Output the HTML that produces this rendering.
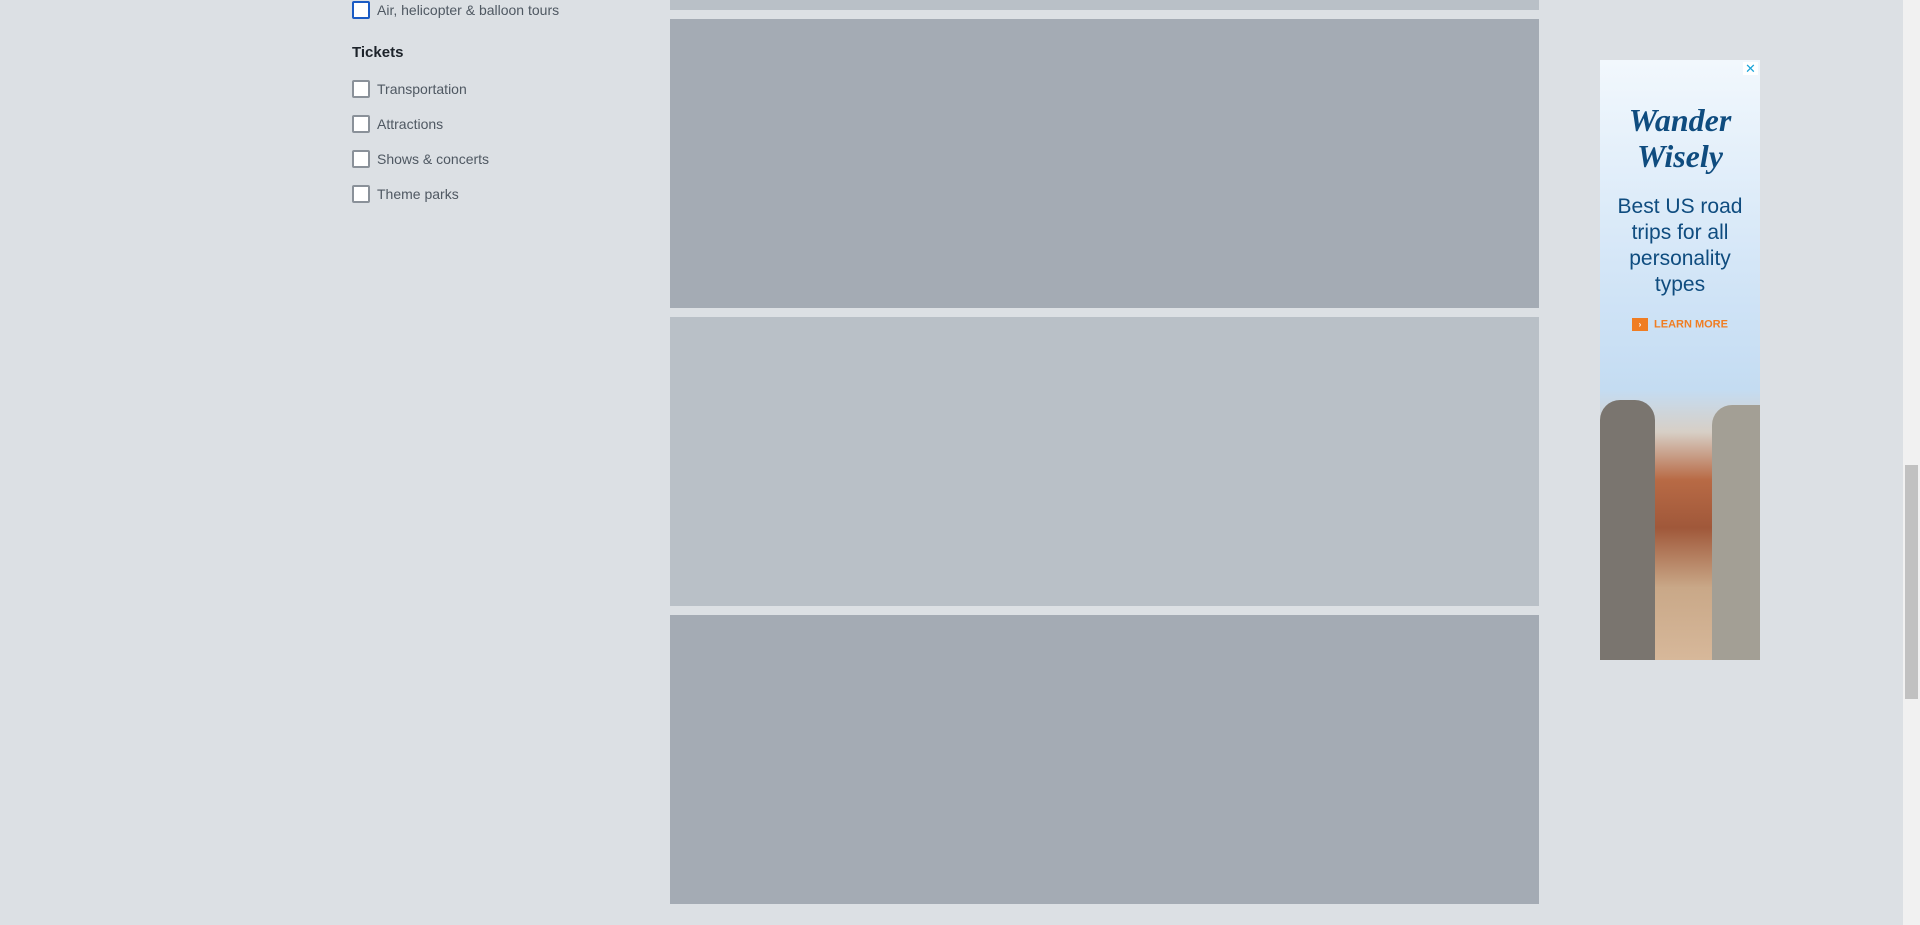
<!DOCTYPE html>
<html><head><meta charset="utf-8"><style>
body{margin:0;width:1920px;height:925px;background:#dce0e4;font-family:"Liberation Sans",sans-serif;overflow:hidden;position:relative}
.cb{position:absolute;left:352px;width:14px;height:14px;border:2px solid #8a9199;border-radius:2px;background:#fff}
.lb{position:absolute;left:377px;font-size:14px;color:#4f5862;line-height:18px}
.card{position:absolute;left:670px;width:869px}
.sb{position:absolute;left:1903px;top:0;width:17px;height:925px;background:#f1f1f1}
</style></head><body>
<div class="cb" style="top:1px;border-color:#1a5bc4"></div><div class="lb" style="top:1px">Air, helicopter &amp; balloon tours</div>
<div style="position:absolute;left:352px;top:44px;font-size:15px;font-weight:bold;color:#1d232a">Tickets</div>
<div class="cb" style="top:80px"></div><div class="lb" style="top:80px">Transportation</div>
<div class="cb" style="top:115px"></div><div class="lb" style="top:115px">Attractions</div>
<div class="cb" style="top:150px"></div><div class="lb" style="top:150px">Shows &amp; concerts</div>
<div class="cb" style="top:185px"></div><div class="lb" style="top:185px">Theme parks</div>
<div class="card" style="top:0;height:10px;background:#b9c0c7"></div>
<div class="card" style="top:19px;height:289px;background:#a4abb4"></div>
<div class="card" style="top:317px;height:289px;background:#b9c0c7"></div>
<div class="card" style="top:615px;height:289px;background:#a4abb4"></div>
<div style="position:absolute;left:1600px;top:60px;width:160px;height:600px;background:linear-gradient(#f2f8fd 0%,#cfe3f6 40%,#c4dcf2 55%,#d7cfc6 62%,#b86a45 70%,#a0583a 78%,#c9a888 88%,#d7b89a 100%);overflow:hidden;text-align:center;color:#0f4c7f">
<div style="position:absolute;right:2px;top:2px;width:15px;height:13px;background:#fff;color:#1aa4d8;font-size:13px;line-height:13px">✕</div>
<div style="margin-top:42px;font-family:'Liberation Serif',serif;font-style:italic;font-weight:bold;font-size:32px;line-height:36px">Wander<br>Wisely</div>
<div style="margin-top:20px;font-size:21px;line-height:26px">Best US road<br>trips for all<br>personality<br>types</div>
<div style="margin-top:20px;font-size:11px;font-weight:bold;color:#f07d22"><span style="display:inline-block;width:16px;height:13px;background:#f07d22;color:#fff;vertical-align:middle;margin-right:6px;font-size:8px;line-height:13px">›</span>LEARN MORE</div>
<div style="position:absolute;left:0;top:340px;width:55px;height:260px;background:#7a756f;border-radius:20px 20px 0 0"></div>
<div style="position:absolute;left:112px;top:345px;width:48px;height:255px;background:#a39f95;border-radius:20px 0 0 0"></div>
</div>
<div class="sb"><div style="position:absolute;left:2px;top:465px;width:13px;height:234px;background:#c1c1c1"></div></div>
</body></html>
